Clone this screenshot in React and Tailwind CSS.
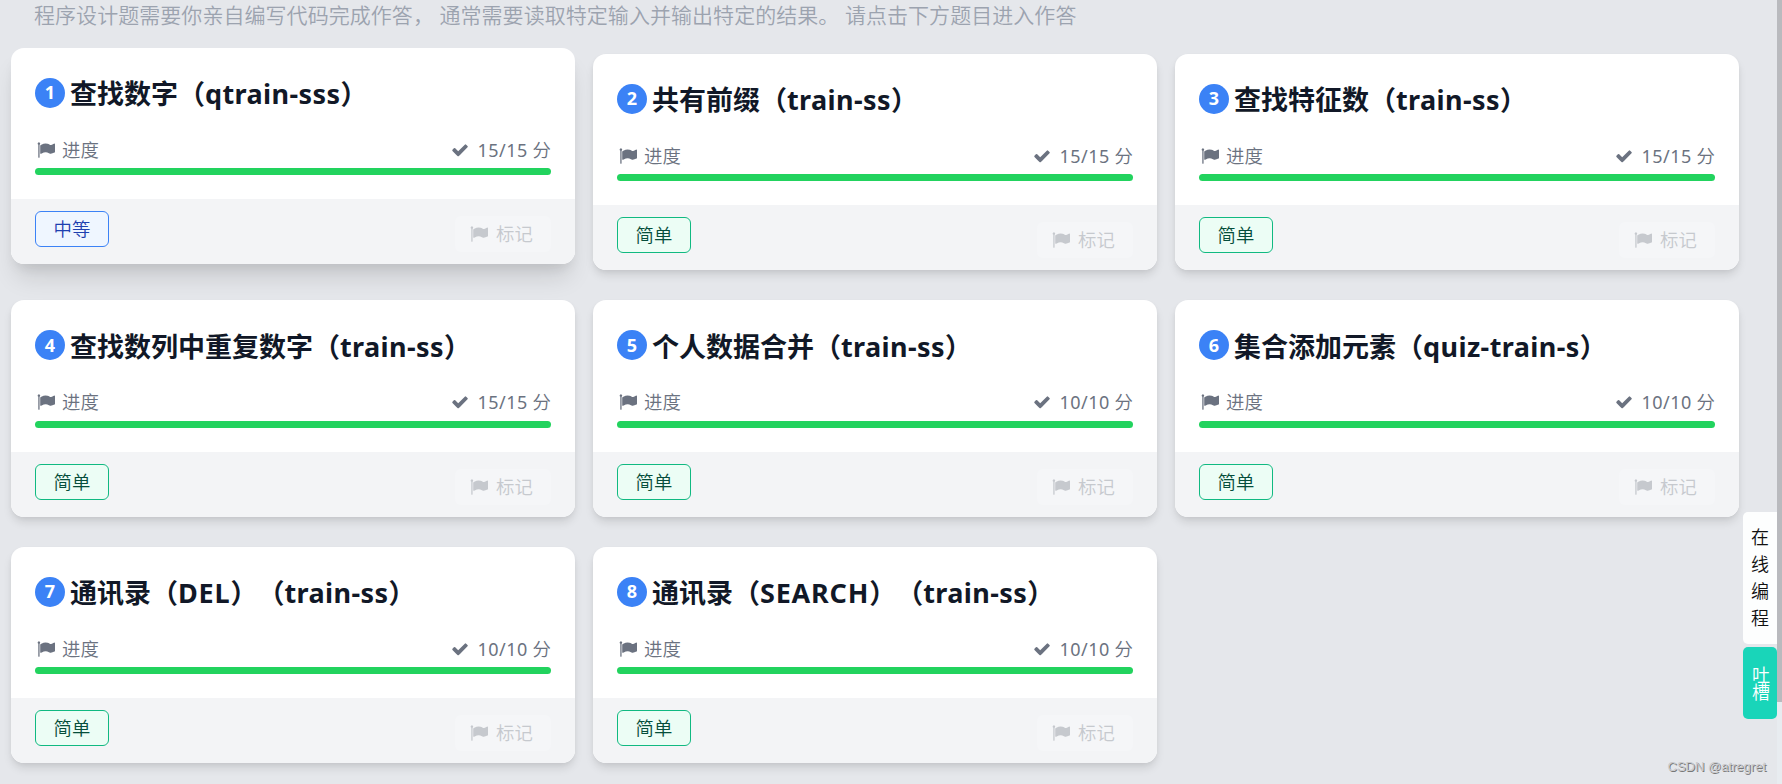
const problems = [
  { title: '查找数字', code: 'qtrain-sss', score: 15, level: 'medium', active: true },
  { title: '共有前缀', code: 'train-ss', score: 15, level: 'easy' },
  { title: '查找特征数', code: 'train-ss', score: 15, level: 'easy' },
  { title: '查找数列中重复数字', code: 'train-ss', score: 15, level: 'easy' },
  { title: '个人数据合并', code: 'train-ss', score: 10, level: 'easy' },
  { title: '集合添加元素', code: 'quiz-train-s', score: 10, level: 'easy' },
  { title: '通讯录', tag: 'DEL', code: 'train-ss', score: 10, level: 'easy' },
  { title: '通讯录', tag: 'SEARCH', code: 'train-ss', score: 10, level: 'easy' },
];

const levels = {
  easy: { label: '简单', className: 'border-[#10b981] bg-[#ecfdf5] text-[#064e3b]' },
  medium: { label: '中等', className: 'border-[#3b82f6] bg-[#eff6ff] text-[#1e40af]' },
};

function FlagIcon() {
  return (
    <svg viewBox="0 0 1792 1792" className="size-[18px] shrink-0" fill="currentColor">
      <path d="M320 256q0 72-64 110v1266q0 13-9.5 22.5t-22.5 9.5h-64q-13 0-22.5-9.5t-9.5-22.5v-1266q-64-38-64-110 0-53 37.5-90.5t90.5-37.5 90.5 37.5 37.5 90.5zm1472 64v763q0 25-12.5 38.5t-39.5 27.5q-215 116-369 116-61 0-123.5-22t-108.5-48-115.5-48-142.5-22q-192 0-464 146-17 9-33 9-26 0-45-19t-19-45v-742q0-32 31-55 21-14 79-43 236-120 421-120 107 0 200 29t219 88q38 19 88 19 54 0 117.5-21t110-47 88-47 54.5-21q26 0 45 19t19 45z" />
    </svg>
  );
}

function CheckIcon() {
  return (
    <svg viewBox="0 0 1792 1792" className="size-[18px] shrink-0" fill="currentColor">
      <path d="M1671 566q0 40-28 68l-724 724-136 136q-28 28-68 28t-68-28l-136-136-362-362q-28-28-28-68t28-68l136-136q28-28 68-28t68 28l294 295 656-657q28-28 68-28t68 28l136 136q28 28 28 68z" />
    </svg>
  );
}

function ProblemCard({ number, problem }) {
  const level = levels[problem.level];

  return (
    <div
      className={`h-[216.5px] overflow-hidden rounded-[13px] bg-white ${
        problem.active
          ? '-translate-y-1.5 shadow-[0_18px_25px_-5px_rgba(0,0,0,0.12),0_8px_12px_-4px_rgba(0,0,0,0.08)]'
          : 'shadow-[0_6px_10px_-1px_rgba(0,0,0,0.11),0_2px_5px_-1px_rgba(0,0,0,0.06)]'
      }`}
    >
      <div className="h-[151.25px] px-6 pt-[29px]">
        <div className="flex h-9 items-center">
          <span className="mb-1 flex size-[30px] shrink-0 items-center justify-center rounded-full bg-[#3b82f6] text-[18px] font-bold text-white">
            {number}
          </span>
          <h2 className="mb-0.5 ml-[5px] whitespace-nowrap text-[27px] leading-[35px] font-bold text-[#111827] [text-spacing-trim:space-all]">
            {problem.title}（
            {problem.tag && (
              <>
                <span className="tracking-[0.8px]">{problem.tag}</span>）（
              </>
            )}
            <span className="tracking-[0.4px]">{problem.code}</span>）
          </h2>
        </div>
        <div className="mt-[23.5px] flex h-[27px] items-center justify-between text-[18.4px] font-[350] text-[#6b7280]">
          <span className="flex items-center gap-[7px] pl-[2px]">
            <FlagIcon />
            进度
          </span>
          <span className="flex items-center gap-2">
            <CheckIcon />
            <span>
              <span className="text-[18px] font-normal tracking-[0.5px]">
                {problem.score}/{problem.score}
              </span>{' '}
              分
            </span>
          </span>
        </div>
        <div className="mt-[4.75px] h-[7px] rounded-full bg-[#22d35e]" />
      </div>

      {/* Footer */}
      <div className="flex h-[66px] items-start justify-between bg-[#f3f4f6] px-6">
        <span
          className={`mt-3 flex h-9 w-[74px] items-center justify-center rounded-[6px] border text-[18.4px] font-[350] ${level.className}`}
        >
          {level.label}
        </span>
        <button className="mt-[17px] flex h-9 w-24 items-center justify-center gap-2 rounded-[6px] bg-[#f5f6f8] pr-[3px] text-[18.4px] font-[350] text-[#c6c9ce]">
          <FlagIcon />
          标记
        </button>
      </div>
    </div>
  );
}

export default function App() {
  return (
    <div className="relative h-[784px] overflow-hidden bg-[#e5e7eb] font-['Noto_Sans','Noto_Sans_CJK_SC',sans-serif]">
      <p className="h-[53.75px] pl-[34px] text-[21px] leading-[31px] font-[350] tracking-[0.05px] text-[#9ca3af]">
        程序设计题需要你亲自编写代码完成作答， 通常需要读取特定输入并输出特定的结果。 请点击下方题目进入作答
      </p>
      <div className="grid grid-cols-[564px_564px_564px] gap-x-[18px] gap-y-[30px] pl-[11px]">
        {problems.map((problem, index) => (
          <ProblemCard key={index} number={index + 1} problem={problem} />
        ))}
      </div>

      {/* Side buttons */}
      <div className="absolute top-[512px] right-[5px] flex w-[34px] flex-col gap-[3px] text-[18px] font-[350]">
        <div className="flex h-[132px] flex-col items-center justify-center rounded-l-[5px] bg-[#fdfefe] text-[#111] leading-[27px]">
          <span>在</span>
          <span>线</span>
          <span>编</span>
          <span>程</span>
        </div>
        <div className="flex h-[72px] items-center justify-center rounded-[5px] bg-[#19d5b9] text-white">
          <span className="leading-[18px] tracking-[-1px] [writing-mode:vertical-rl]">吐槽</span>
        </div>
      </div>

      {/* Scrollbar */}
      <div className="absolute top-0 right-0 h-full w-[5px] bg-[#e8ecf0]">
        <div className="h-[702px] bg-[#b9babe]" />
      </div>

      <div className="absolute right-[16px] bottom-[7px] font-['Liberation_Sans',sans-serif] text-[13px] leading-5 text-[#c9cacd] [text-shadow:1px_1px_0_#777]">
        CSDN @atregret
      </div>
    </div>
  );
}
